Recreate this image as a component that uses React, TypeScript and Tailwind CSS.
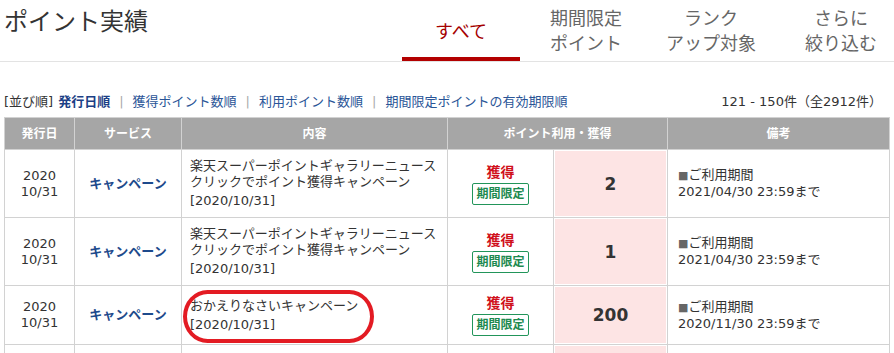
import React from "react";

const ROWS = [
  {
    year: "2020",
    day: "10/31",
    service: "キャンペーン",
    lines: ["楽天スーパーポイントギャラリーニュース", "クリックでポイント獲得キャンペーン"],
    date: "[2020/10/31]",
    points: "2",
    until: "2021/04/30 23:59まで",
  },
  {
    year: "2020",
    day: "10/31",
    service: "キャンペーン",
    lines: ["楽天スーパーポイントギャラリーニュース", "クリックでポイント獲得キャンペーン"],
    date: "[2020/10/31]",
    points: "1",
    until: "2021/04/30 23:59まで",
  },
  {
    year: "2020",
    day: "10/31",
    service: "キャンペーン",
    lines: ["おかえりなさいキャンペーン"],
    date: "[2020/10/31]",
    points: "200",
    until: "2020/11/30 23:59まで",
  },
];

const SORTS = ["獲得ポイント数順", "利用ポイント数順", "期間限定ポイントの有効期限順"];

export default function App() {
  return (
    <div className="relative w-[894px] h-[353px] overflow-hidden bg-white text-[#333] font-['DejaVu_Sans','Noto_Sans_CJK_JP',sans-serif]">
      {/* header + tabs */}
      <div className="flex h-[62px] border-b border-[#e3e3e3]">
        <h1 className="flex-1 pl-[4px] pt-[6px] text-[24px] leading-[32px] font-normal text-[#333]">ポイント実績</h1>
        <div className="flex text-[18px]">
          <div className="w-[118px] flex items-center justify-center pt-[5px] border-b-4 border-[#b30000] text-[#a50000]">
            すべて
          </div>
          <div className="w-[132px] flex flex-col items-center justify-center pt-[1px] leading-[25px] text-[#666]">
            <span>期間限定</span>
            <span>ポイント</span>
          </div>
          <div className="w-[118px] flex flex-col items-center justify-center pt-[1px] leading-[25px] text-[#666]">
            <span>ランク</span>
            <span>アップ対象</span>
          </div>
          <div className="w-[124px] pl-[18px] flex flex-col items-center justify-center pt-[1px] leading-[25px] text-[#666]">
            <span>さらに</span>
            <span>絞り込む</span>
          </div>
        </div>
      </div>

      {/* sort row */}
      <div className="mt-[30px] h-[20px] flex items-center justify-between pl-[4px] pr-[12px] text-[13px]">
        <div className="flex items-center">
          <span>[並び順]</span>
          <span className="ml-[5px] font-bold text-[#1c3f86]">発行日順</span>
          {SORTS.map((s) => (
            <React.Fragment key={s}>
              <span className="px-[9px] text-[#aaa]">|</span>
              <span className="text-[#2a5597]">{s}</span>
            </React.Fragment>
          ))}
        </div>
        <span>121 - 150件（全2912件）</span>
      </div>

      {/* table */}
      <table className="mt-[5px] ml-[4px] w-[885px] table-fixed border-collapse text-[13px] leading-[16px]">
        <colgroup>
          <col className="w-[70px]" />
          <col className="w-[107px]" />
          <col className="w-[266px]" />
          <col className="w-[106px]" />
          <col className="w-[114px]" />
          <col className="w-[222px]" />
        </colgroup>
        <thead>
          <tr className="h-[32px] bg-[#a6a6a6] text-white text-[12px] font-bold">
            <th className="border border-[#d2d2d2]">発行日</th>
            <th className="border border-[#d2d2d2]">サービス</th>
            <th className="border border-[#d2d2d2]">内容</th>
            <th colSpan={2} className="border border-[#d2d2d2]">ポイント利用・獲得</th>
            <th className="border border-[#d2d2d2]">備考</th>
          </tr>
        </thead>
        <tbody>
          {ROWS.map((r, i) => (
            <tr key={i}>
              <td className="border border-[#d2d2d2] py-2 text-center align-middle">
                <div>{r.year}</div>
                <div>{r.day}</div>
              </td>
              <td className="border border-[#d2d2d2] py-2 text-center align-middle font-bold text-[#1d4a8c]">
                {r.service}
              </td>
              <td className="border border-[#d2d2d2] py-2 px-2 align-middle">
                {r.lines.map((l) => (
                  <div key={l} className="whitespace-nowrap">{l}</div>
                ))}
                <div className="mt-[3px]">{r.date}</div>
              </td>
              <td className="border border-[#d2d2d2] py-2 text-center align-middle">
                <div className="text-[14px] leading-[18px] font-bold text-[#d0101b]">獲得</div>
                <div className="mt-[2px] inline-flex h-[22px] items-center px-[3px] border border-[#22955a] rounded-[2px] text-[12px] font-bold text-[#1d8a50]">
                  期間限定
                </div>
              </td>
              <td className="border border-[#d2d2d2] bg-[#fde4e4] shadow-[inset_0_0_0_1px_#ffffff] text-center align-middle text-[17px] font-bold text-[#333]">
                {r.points}
              </td>
              <td className="border border-[#d2d2d2] py-2 pl-[10px] align-middle">
                <div>
                  <span className="text-[#666] text-[11px]">■</span>ご利用期間
                </div>
                <div>{r.until}</div>
              </td>
            </tr>
          ))}
          {/* next row, cut off by the window */}
          <tr className="h-[60px]">
            <td className="border border-[#d2d2d2]" />
            <td className="border border-[#d2d2d2]" />
            <td className="border border-[#d2d2d2]" />
            <td className="border border-[#d2d2d2]" />
            <td className="border border-[#d2d2d2] bg-[#fde4e4] shadow-[inset_0_0_0_1px_#ffffff]" />
            <td className="border border-[#d2d2d2]" />
          </tr>
        </tbody>
      </table>

      {/* hand-drawn highlight annotation */}
      <div className="absolute left-[183px] top-[290px] w-[191px] h-[53px] border-[4px] border-[#e31b23] rounded-[26px/28px]" />
    </div>
  );
}
